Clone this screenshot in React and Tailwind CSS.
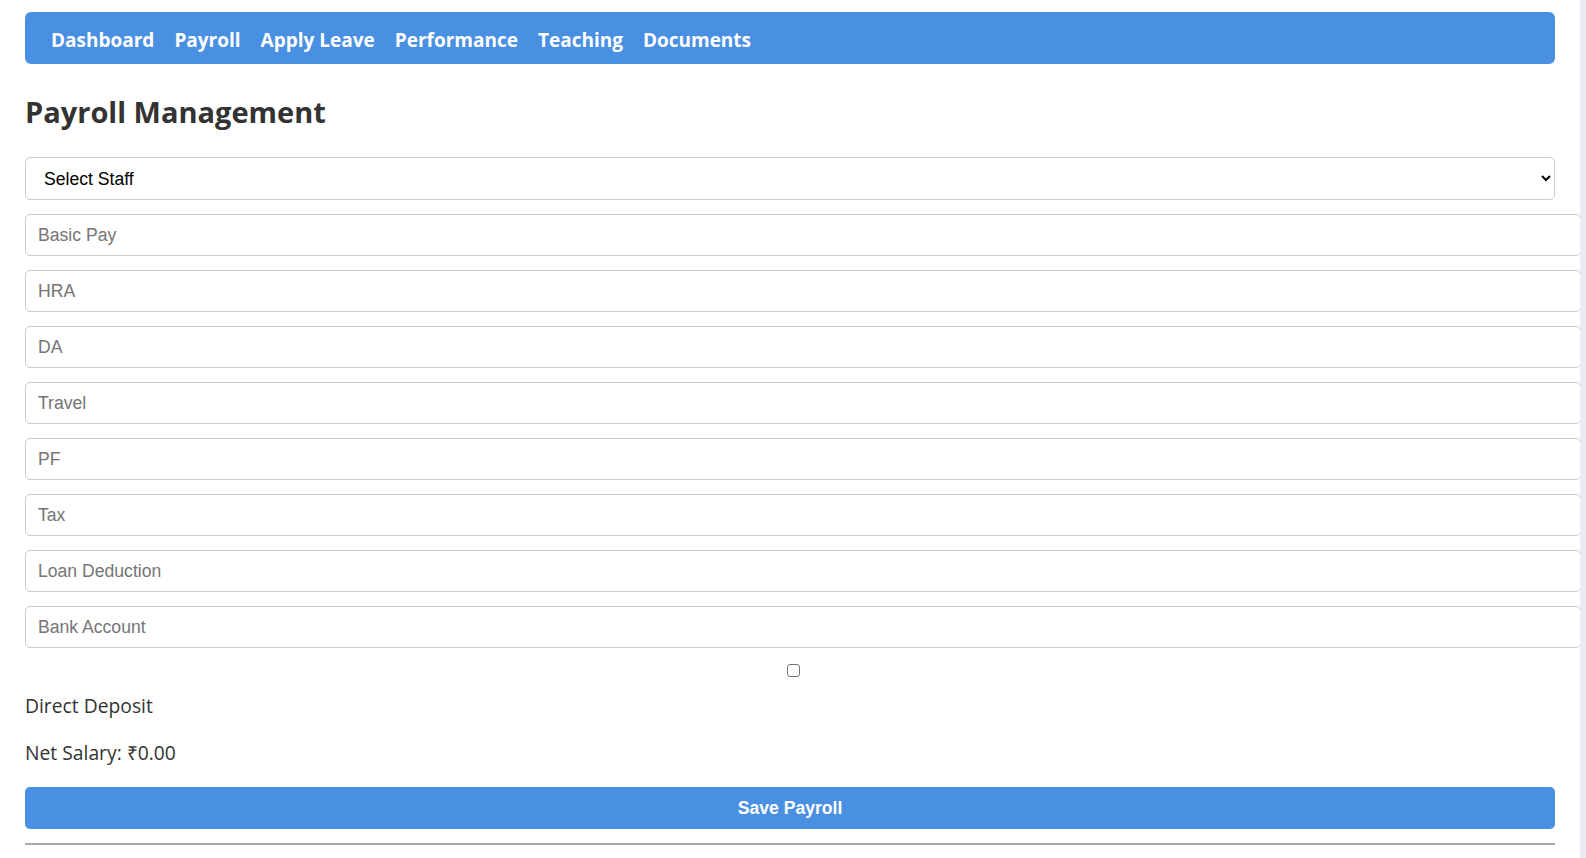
import { useState } from "react";

const fields = ["Basic Pay", "HRA", "DA", "Travel", "PF", "Tax", "Loan Deduction", "Bank Account"];
const links = ["Dashboard", "Payroll", "Apply Leave", "Performance", "Teaching", "Documents"];

export default function App() {
  const [staff, setStaff] = useState("");
  const [direct, setDirect] = useState(false);

  return (
    <div className="flex h-[858px] overflow-hidden bg-white font-['Open_Sans',sans-serif] text-[#333]">
      <main className="min-w-0 flex-1 px-[25px] pt-3">
        <nav className="flex h-[52px] items-center rounded-md bg-[#4a90e2] px-4 pt-[4px]">
          {links.map((l) => (
            <a key={l} href="#" className="px-[10px] text-[19px] font-bold text-white">
              {l}
            </a>
          ))}
        </nav>

        <h2 className="mt-[28px] text-[29px] font-bold leading-[40px] text-[#333]">Payroll Management</h2>

        <select
          value={staff}
          onChange={(e) => setStaff(e.target.value)}
          className="mt-[25px] block h-[43px] w-full rounded-[5px] border border-[#ccc] bg-white px-[14px] font-['Liberation_Sans',Arial,sans-serif] text-[17.6px] text-black"
        >
          <option value="">Select Staff</option>
        </select>

        <div className="mt-[14px] flex flex-col gap-[14px]">
          {fields.map((f) => (
            <input
              key={f}
              type="text"
              placeholder={f}
              className="box-content block h-[40px] w-full rounded-[5px] border border-[#ccc] px-3 font-['Liberation_Sans',Arial,sans-serif] text-[17.6px] text-black placeholder:text-[#757575]"
            />
          ))}
        </div>

        <div className="mt-[16px] flex h-[13px]">
          <input
            type="checkbox"
            checked={direct}
            onChange={(e) => setDirect(e.target.checked)}
            className="ml-[762px] h-[13px] w-[13px] appearance-none rounded-[3px] border border-[#767676] bg-white"
          />
        </div>

        <p className="mt-[15px] text-[19.3px] leading-[28px]">Direct Deposit</p>
        <p className="mt-[19px] text-[19.3px] leading-[28px]">Net Salary: ₹0.00</p>

        <button className="mt-[20px] block h-[42px] w-full rounded-[5px] bg-[#4a90e2] font-['Liberation_Sans',Arial,sans-serif] text-[17.6px] font-bold text-white">
          Save Payroll
        </button>

        <hr className="mt-[14px] border-t-2 border-[#aaa]" />
      </main>
      <div className="w-[6px] shrink-0 bg-[#e9ebf3]" />
    </div>
  );
}
